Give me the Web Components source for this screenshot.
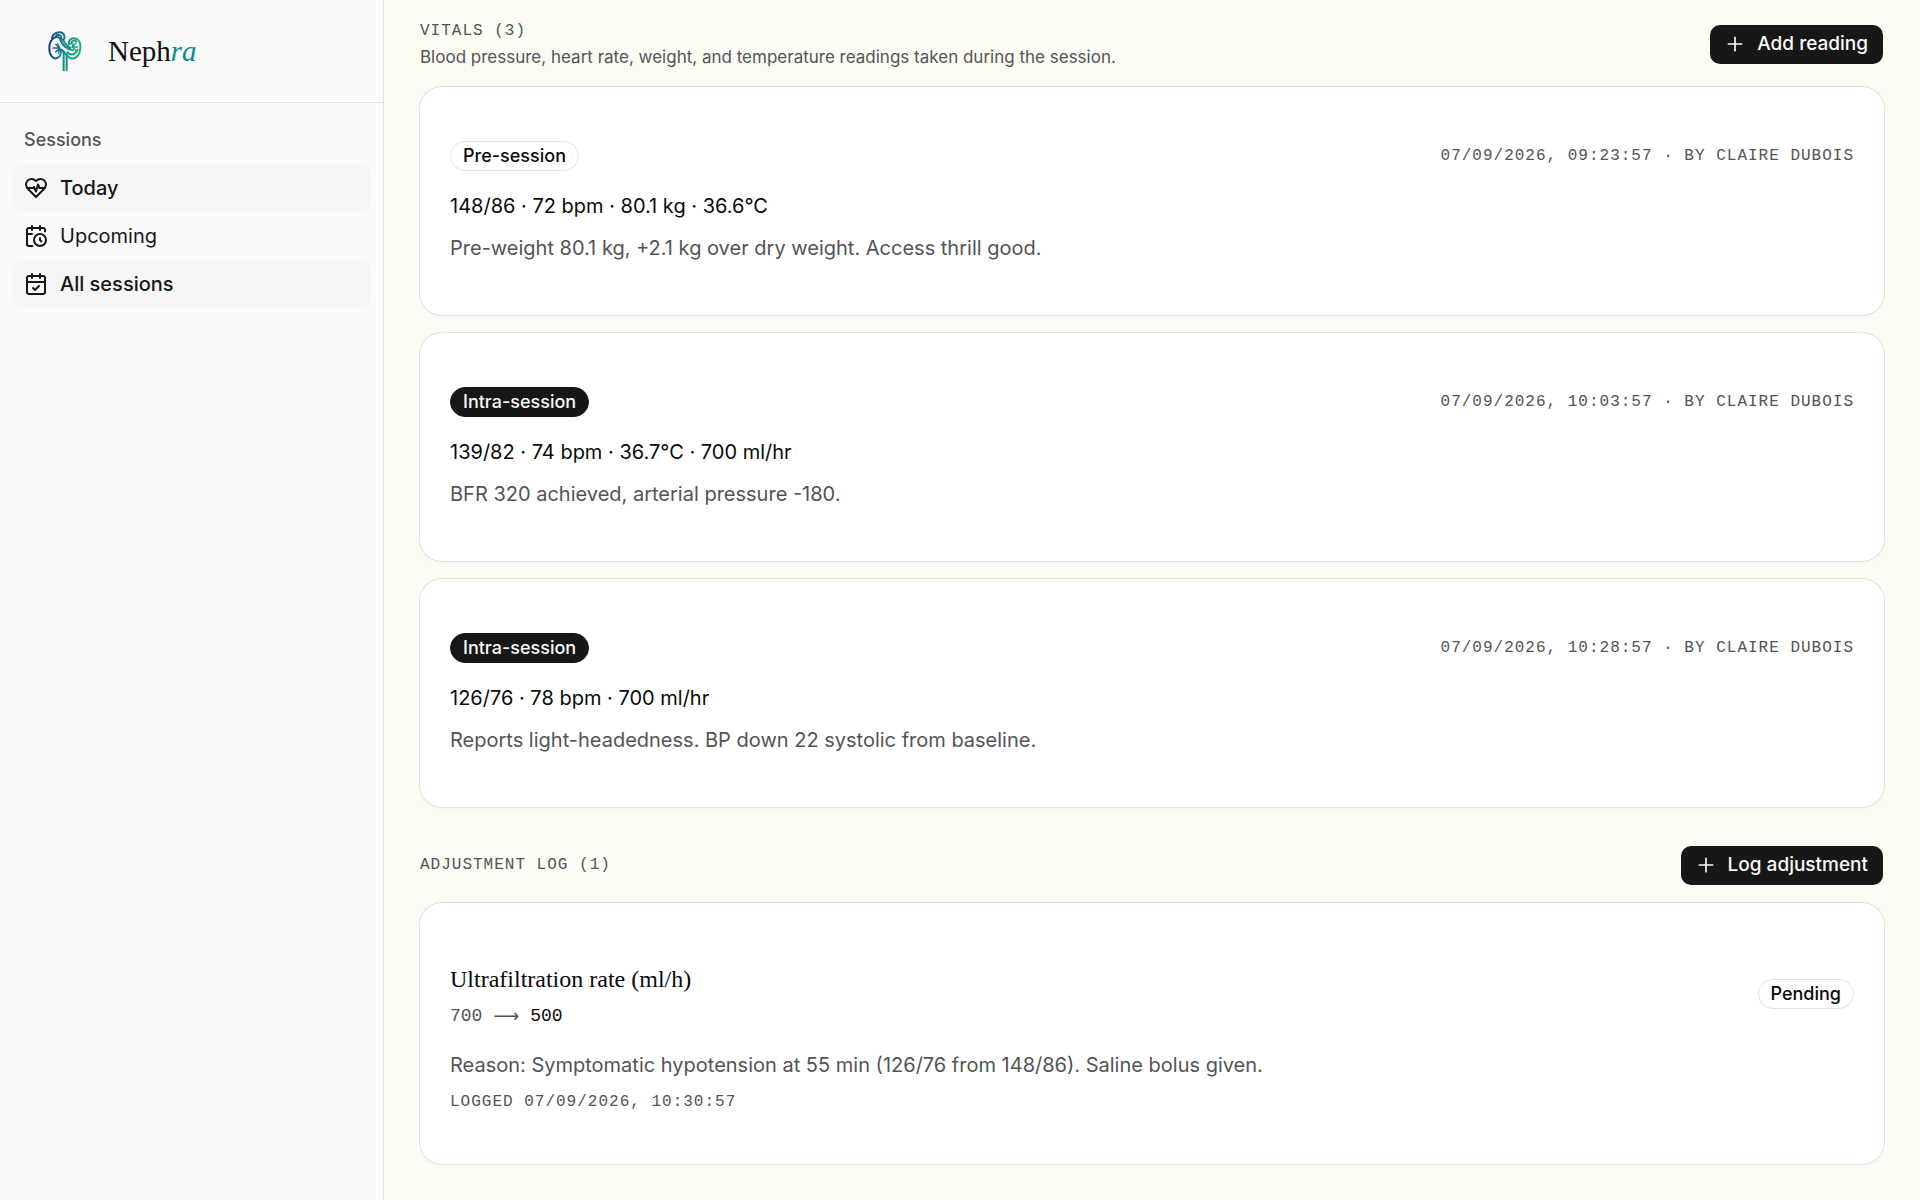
<!DOCTYPE html>
<html lang="en">
<head>
<meta charset="UTF-8">
<meta name="viewport" content="width=device-width, initial-scale=1.0">
<title>Nephra - Session</title>
<style>
    :root {
        --sans: Inter, "Liberation Sans", sans-serif;
        --mono: "Liberation Mono", monospace;
        --serif: "Liberation Serif", serif;
        --ink: #171717;
        --muted: #525456;
        --line: #e2e3e1;
    }
    body {
        margin: 0;
        font-family: var(--sans);
        font-size: 20px;
        line-height: 30px;
        color: #0a0a0a;
        background: #fcfcf5;
    }
</style>
</head>
<body>
<app-shell>
    <app-sidebar slot="sidebar">
        <nav-item icon="heart" href="#today" active>Today</nav-item>
        <nav-item icon="clock" href="#upcoming">Upcoming</nav-item>
        <nav-item icon="check" href="#all" active>All sessions</nav-item>
    </app-sidebar>

    <log-section heading="Vitals (3)" action="Add reading">
        <span slot="description">Blood pressure, heart rate, weight, and temperature readings taken during the session.</span>
        <vitals-card badge="Pre-session" variant="outline" meta="07/09/2026, 09:23:57 · by Claire Dubois">
            <span slot="values">148/86 · 72 bpm · 80.1 kg · 36.6°C</span>
            Pre-weight 80.1 kg, +2.1 kg over dry weight. Access thrill good.
        </vitals-card>
        <vitals-card badge="Intra-session" variant="solid" meta="07/09/2026, 10:03:57 · by Claire Dubois">
            <span slot="values">139/82 · 74 bpm · 36.7°C · 700 ml/hr</span>
            BFR 320 achieved, arterial pressure -180.
        </vitals-card>
        <vitals-card badge="Intra-session" variant="solid" meta="07/09/2026, 10:28:57 · by Claire Dubois">
            <span slot="values">126/76 · 78 bpm · 700 ml/hr</span>
            Reports light-headedness. BP down 22 systolic from baseline.
        </vitals-card>
    </log-section>

    <log-section heading="Adjustment log (1)" action="Log adjustment">
        <adjustment-card name="Ultrafiltration rate (ml/h)" from="700" to="500" status="Pending" logged="Logged 07/09/2026, 10:30:57">
            Reason: Symptomatic hypotension at 55 min (126/76 from 148/86). Saline bolus given.
        </adjustment-card>
    </log-section>
</app-shell>

<script>
    class AppShell extends HTMLElement {
        connectedCallback() {
            this.attachShadow({ mode: 'open' });
            this.shadowRoot.innerHTML = `
                <style>
                    :host {
                        display: grid;
                        grid-template-columns: 384px minmax(0, 1fr);
                        min-height: 100vh;
                    }
                    main {
                        display: flex;
                        flex-direction: column;
                        gap: 38px;
                        padding: 19px 36px 32px;
                    }
                </style>
                <slot name="sidebar"></slot>
                <main><slot></slot></main>
            `;
        }
    }
    customElements.define('app-shell', AppShell);

    class NephraLogo extends HTMLElement {
        connectedCallback() {
            this.attachShadow({ mode: 'open' });
            this.shadowRoot.innerHTML = `
                <style>
                    :host { display: block; }
                    a {
                        display: flex;
                        align-items: center;
                        gap: 26px;
                        color: #111;
                        text-decoration: none;
                        font-family: var(--serif);
                        font-size: 29px;
                        line-height: 40px;
                    }
                    svg { width: 34px; height: 40px; }
                    em { color: #0e8a8c; }
                </style>
                <a href="#home">
                    <svg viewBox="0 0 100 120" fill="none" stroke="url(#tint)" stroke-width="6" stroke-linecap="round" aria-hidden="true">
                        <defs>
                            <linearGradient id="tint" gradientUnits="userSpaceOnUse" x1="0" y1="50" x2="100" y2="60">
                                <stop offset="0" stop-color="#1d4289"/>
                                <stop offset=".5" stop-color="#128c8f"/>
                                <stop offset="1" stop-color="#22b573"/>
                            </linearGradient>
                        </defs>
                        <path d="M37 25C29 12 5 18 3 48C2 71 12 84 24 82C34 80 39 70 37 58"/>
                        <path d="M11 22C13 5 41-5 48 14C50 23 46 28 40 26"/>
                        <path d="M22 16C29 8 40 12 39 22"/>
                        <path d="M36 27C43 43 56 55 74 58M44 26C50 38 58 46 66 50"/>
                        <path d="M62 40C57 17 94 14 96 43C98 69 83 86 67 82C57 79 54 67 42 58"/>
                        <path d="M68 38C70 28 80 26 84 32M58 64C68 76 82 70 88 56"/>
                        <path d="M46 118V66C46 60 42 58 37 55M55 118V70"/>
                        <g stroke-width="4">
                            <path d="M14 51H34M34 51L22 40M34 51L22 63M28 38L34 51M30 66L34 52"/>
                            <path d="M88 48H72L82 37M72 48L84 60M72 48L74 36"/>
                        </g>
                    </svg>
                    <span>Neph<em>ra</em></span>
                </a>
            `;
        }
    }
    customElements.define('nephra-logo', NephraLogo);

    class AppSidebar extends HTMLElement {
        connectedCallback() {
            this.attachShadow({ mode: 'open' });
            this.shadowRoot.innerHTML = `
                <style>
                    :host {
                        display: block;
                        background: #fafafa;
                        border-right: 1px solid var(--line);
                    }
                    header {
                        padding: 31px 48px;
                        border-bottom: 1px solid var(--line);
                    }
                    nav {
                        display: flex;
                        flex-direction: column;
                        padding: 16px 12px;
                    }
                    h2 {
                        margin: 0 0 3px;
                        padding: 0 12px;
                        font-size: 18px;
                        font-weight: 500;
                        line-height: 42px;
                        color: var(--muted);
                    }
                </style>
                <header><nephra-logo></nephra-logo></header>
                <nav aria-label="Sessions">
                    <h2>Sessions</h2>
                    <slot></slot>
                </nav>
            `;
        }
    }
    customElements.define('app-sidebar', AppSidebar);

    const NAV_ICONS = {
        heart: `
            <path d="M19 14c1.490-1.460 3-3.210 3-5.500A5.500 5.500 0 0 0 16.500 3c-1.760 0-3 .500-4.500 2-1.500-1.500-2.740-2-4.500-2A5.500 5.500 0 0 0 2 8.500c0 2.300 1.500 4.050 3 5.500l7 7Z"/>
            <path d="M3.220 12H9.500l.500-1 2 4.500 2-7 1.500 3.500h5.270"/>`,
        clock: `
            <path d="M21 7.500V6a2 2 0 0 0-2-2H5a2 2 0 0 0-2 2v14a2 2 0 0 0 2 2h3.500"/>
            <path d="M16 2v4M8 2v4M3 10h5M17.500 17.500 16 16.300V14"/>
            <circle cx="16" cy="16" r="6"/>`,
        check: `
            <rect x="3" y="4" width="18" height="18" rx="2"/>
            <path d="M8 2v4M16 2v4M3 10h18M9 16l2 2 4-4"/>`
    };

    class NavItem extends HTMLElement {
        connectedCallback() {
            this.attachShadow({ mode: 'open' });
            this.shadowRoot.innerHTML = `
                <style>
                    :host { display: block; }
                    a {
                        display: flex;
                        align-items: center;
                        gap: 12px;
                        padding: 9px 12px;
                        border-radius: 12px;
                        color: var(--ink);
                        text-decoration: none;
                    }
                    :host([active]) a {
                        background: #f5f5f5;
                        font-weight: 500;
                    }
                    svg { width: 24px; height: 24px; }
                </style>
                <a href="${this.getAttribute('href')}">
                    <svg viewBox="0 0 24 24" fill="none" stroke="currentColor" stroke-width="2" stroke-linecap="round" stroke-linejoin="round" aria-hidden="true">${NAV_ICONS[this.getAttribute('icon')]}</svg>
                    <slot></slot>
                </a>
            `;
        }
    }
    customElements.define('nav-item', NavItem);

    class ActionButton extends HTMLElement {
        connectedCallback() {
            this.attachShadow({ mode: 'open' });
            this.shadowRoot.innerHTML = `
                <style>
                    :host { display: block; flex-shrink: 0; }
                    button {
                        display: flex;
                        align-items: center;
                        gap: 12px;
                        height: 39px;
                        padding: 0 15px;
                        border: 0;
                        border-radius: 10px;
                        background: var(--ink);
                        color: #fafafa;
                        font-family: inherit;
                        font-size: 19px;
                        font-weight: 500;
                        line-height: 24px;
                    }
                    svg { width: 20px; height: 20px; }
                </style>
                <button type="button">
                    <svg viewBox="0 0 24 24" fill="none" stroke="currentColor" stroke-width="2" stroke-linecap="round" aria-hidden="true"><path d="M4 12h16M12 4v16"/></svg>
                    <slot></slot>
                </button>
            `;
        }
    }
    customElements.define('action-button', ActionButton);

    class LogSection extends HTMLElement {
        connectedCallback() {
            this.attachShadow({ mode: 'open' });
            this.shadowRoot.innerHTML = `
                <style>
                    :host { display: block; }
                    section, header div {
                        display: flex;
                        flex-direction: column;
                    }
                    section { gap: 18px; }
                    header {
                        display: flex;
                        align-items: center;
                        justify-content: space-between;
                        gap: 24px;
                        min-height: 40px;
                        padding-right: 1px;
                    }
                    header div {
                        gap: 2px;
                        font-size: 17px;
                        line-height: 24px;
                        color: var(--muted);
                    }
                    h2 {
                        margin: 0;
                        font-family: var(--mono);
                        font-size: 16px;
                        font-weight: 400;
                        line-height: 24px;
                        letter-spacing: 1px;
                        text-transform: uppercase;
                    }
                </style>
                <section>
                    <header>
                        <div>
                            <h2>${this.getAttribute('heading')}</h2>
                            <slot name="description"></slot>
                        </div>
                        <action-button>${this.getAttribute('action')}</action-button>
                    </header>
                    <slot></slot>
                </section>
            `;
        }
    }
    customElements.define('log-section', LogSection);

    class StatusBadge extends HTMLElement {
        connectedCallback() {
            this.attachShadow({ mode: 'open' });
            this.shadowRoot.innerHTML = `
                <style>
                    :host {
                        display: block;
                        flex-shrink: 0;
                        box-sizing: border-box;
                        padding: 2px 12px;
                        border: 1px solid var(--line);
                        border-radius: 15px;
                        font-size: 18px;
                        font-weight: 500;
                        line-height: 24px;
                    }
                    :host([variant="solid"]) {
                        background: var(--ink);
                        border-color: var(--ink);
                        color: #fafafa;
                    }
                </style>
                <slot></slot>
            `;
        }
    }
    customElements.define('status-badge', StatusBadge);

    // shared by both kinds of card
    const CARD_STYLE = `
        :host {
            display: flex;
            flex-direction: column;
            padding: 54px 30px 52px;
            border-radius: 22px;
            background: #fff;
            box-shadow: 0 0 0 1px var(--line), 0 1px 3px rgba(0, 0, 0, 0.05);
        }
        .row {
            display: flex;
            align-items: center;
            justify-content: space-between;
            gap: 24px;
            margin-bottom: 20px;
        }
        p { margin: 0; }
        .note { color: var(--muted); }
        .meta {
            font-family: var(--mono);
            font-size: 16px;
            line-height: 20px;
            letter-spacing: 1px;
            text-transform: uppercase;
            color: var(--muted);
        }
    `;

    class VitalsCard extends HTMLElement {
        connectedCallback() {
            this.attachShadow({ mode: 'open' });
            this.shadowRoot.innerHTML = `
                <style>
                    ${CARD_STYLE}
                    .note { margin-top: 12px; }
                </style>
                <div class="row">
                    <status-badge variant="${this.getAttribute('variant')}">${this.getAttribute('badge')}</status-badge>
                    <span class="meta">${this.getAttribute('meta')}</span>
                </div>
                <p><slot name="values"></slot></p>
                <p class="note"><slot></slot></p>
            `;
        }
    }
    customElements.define('vitals-card', VitalsCard);

    class AdjustmentCard extends HTMLElement {
        connectedCallback() {
            this.attachShadow({ mode: 'open' });
            this.shadowRoot.innerHTML = `
                <style>
                    ${CARD_STYLE}
                    h3 {
                        margin: 0;
                        font-family: var(--serif);
                        font-size: 24px;
                        font-weight: 400;
                        line-height: 45px;
                    }
                    .change {
                        display: flex;
                        align-items: center;
                        gap: 11px;
                        font-family: var(--mono);
                        font-size: 18px;
                        line-height: 28px;
                        color: var(--muted);
                    }
                    .arrow { font-family: "DejaVu Sans", sans-serif; }
                    strong { font-weight: 400; color: #0a0a0a; }
                    .meta { margin-top: 12px; }
                </style>
                <div class="row">
                    <div>
                        <h3>${this.getAttribute('name')}</h3>
                        <p class="change">
                            <span>${this.getAttribute('from')}</span>
                            <span class="arrow">⟶</span>
                            <strong>${this.getAttribute('to')}</strong>
                        </p>
                    </div>
                    <status-badge variant="outline">${this.getAttribute('status')}</status-badge>
                </div>
                <p class="note"><slot></slot></p>
                <p class="meta">${this.getAttribute('logged')}</p>
            `;
        }
    }
    customElements.define('adjustment-card', AdjustmentCard);
</script>
</body>
</html>
